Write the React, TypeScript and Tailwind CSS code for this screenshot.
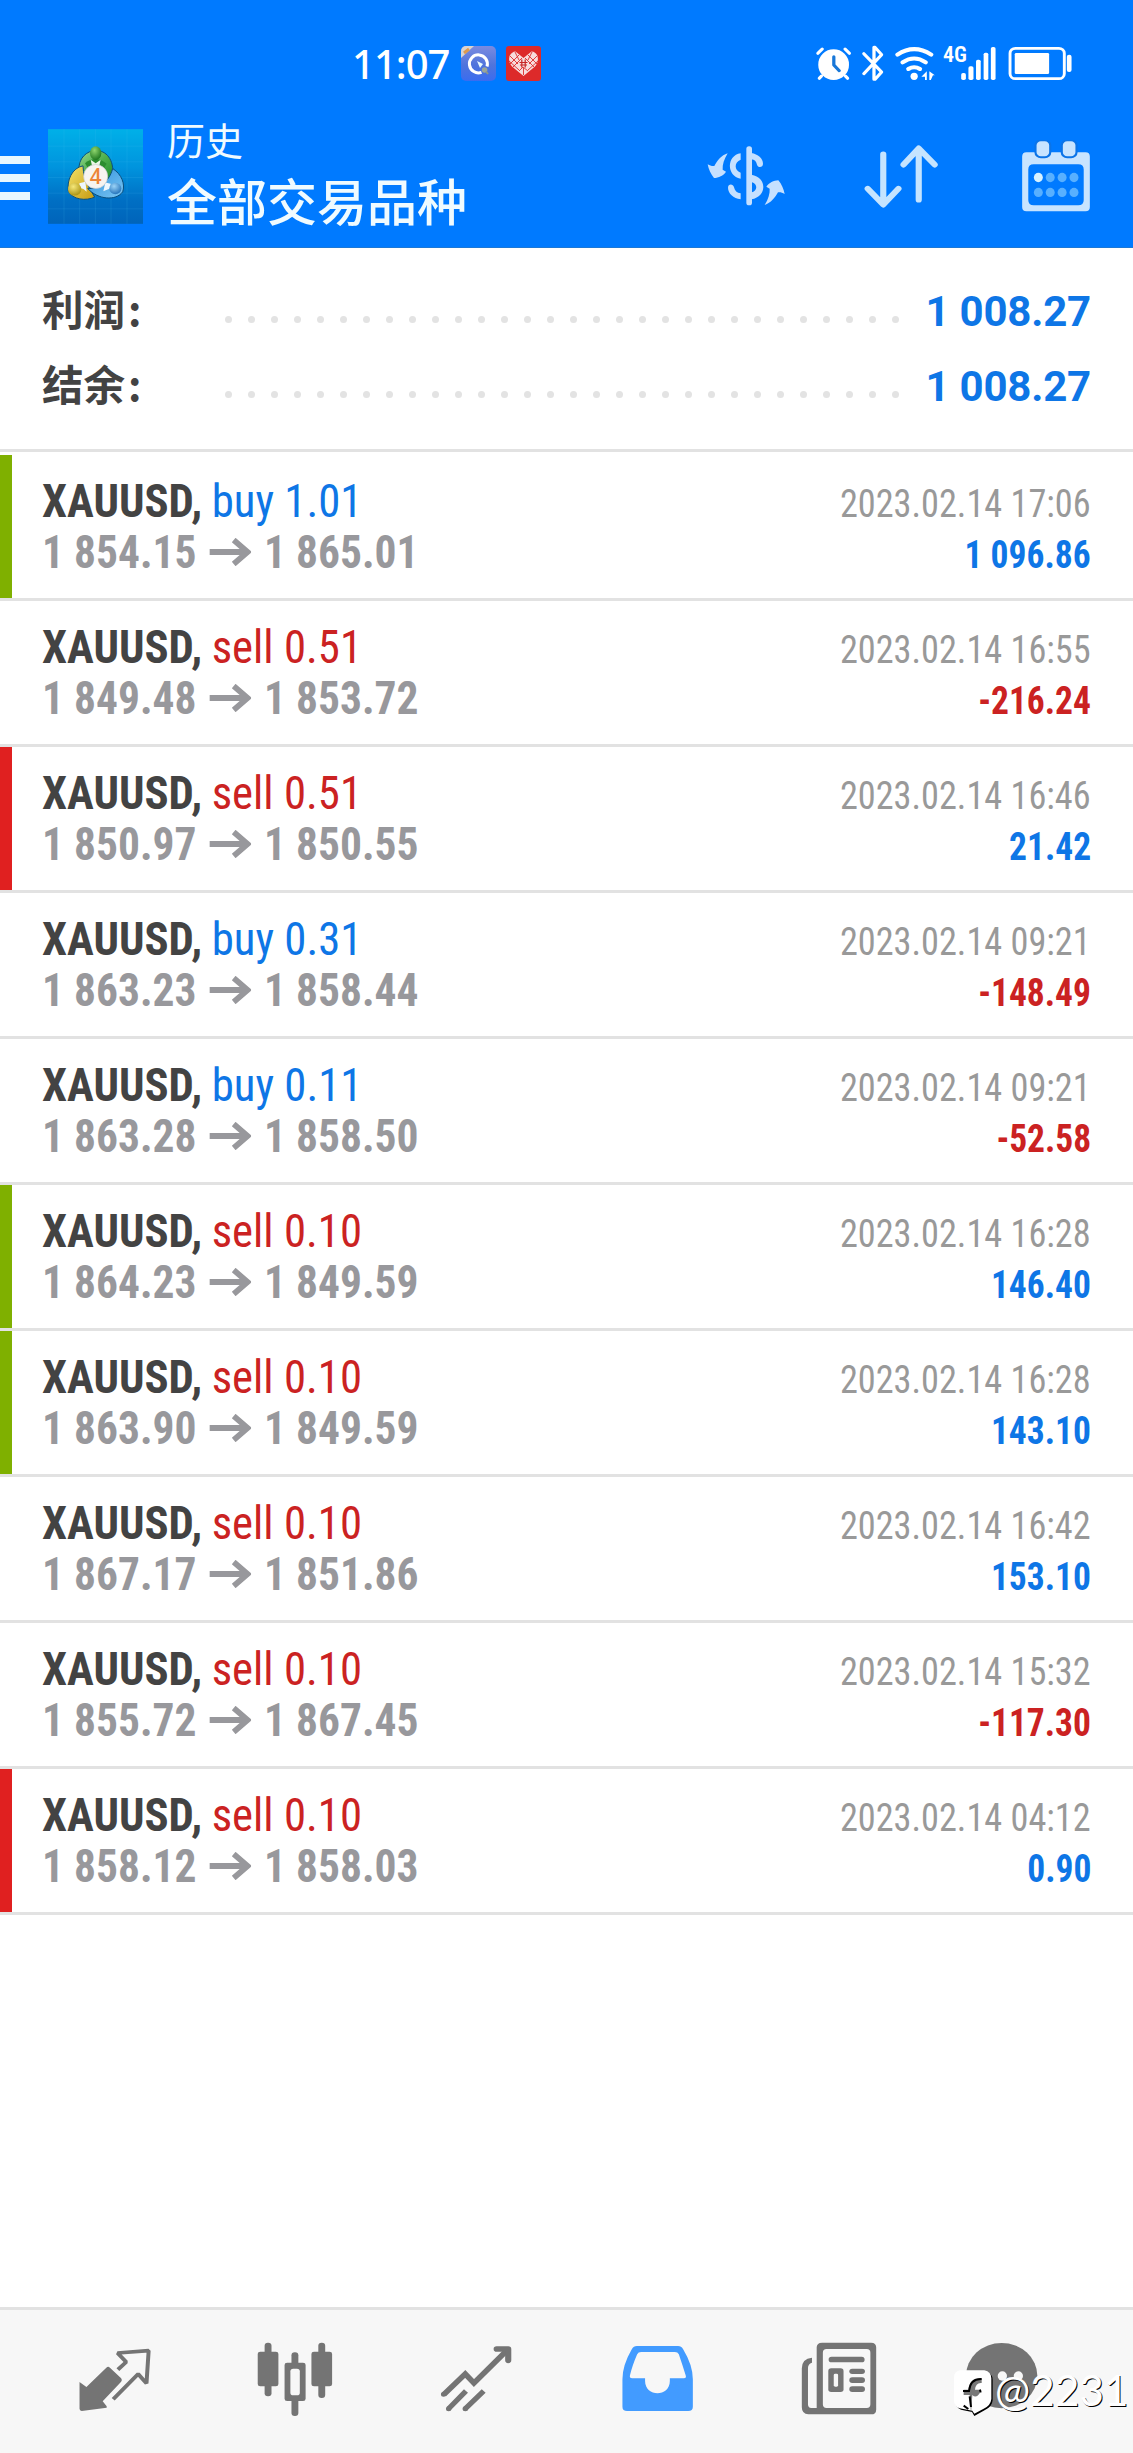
import React from "react";

type Deal = {
  side: "buy" | "sell";
  volume: string;
  open: string;
  close: string;
  time: string;
  profit: string;
  mark?: "tp" | "sl";
};

const deals: Deal[] = [
  { side: "buy", volume: "1.01", open: "1 854.15", close: "1 865.01", time: "2023.02.14 17:06", profit: "1 096.86", mark: "tp" },
  { side: "sell", volume: "0.51", open: "1 849.48", close: "1 853.72", time: "2023.02.14 16:55", profit: "-216.24" },
  { side: "sell", volume: "0.51", open: "1 850.97", close: "1 850.55", time: "2023.02.14 16:46", profit: "21.42", mark: "sl" },
  { side: "buy", volume: "0.31", open: "1 863.23", close: "1 858.44", time: "2023.02.14 09:21", profit: "-148.49" },
  { side: "buy", volume: "0.11", open: "1 863.28", close: "1 858.50", time: "2023.02.14 09:21", profit: "-52.58" },
  { side: "sell", volume: "0.10", open: "1 864.23", close: "1 849.59", time: "2023.02.14 16:28", profit: "146.40", mark: "tp" },
  { side: "sell", volume: "0.10", open: "1 863.90", close: "1 849.59", time: "2023.02.14 16:28", profit: "143.10", mark: "tp" },
  { side: "sell", volume: "0.10", open: "1 867.17", close: "1 851.86", time: "2023.02.14 16:42", profit: "153.10" },
  { side: "sell", volume: "0.10", open: "1 855.72", close: "1 867.45", time: "2023.02.14 15:32", profit: "-117.30" },
  { side: "sell", volume: "0.10", open: "1 858.12", close: "1 858.03", time: "2023.02.14 04:12", profit: "0.90", mark: "sl" },
];

function SearchAppIcon() {
  return (
    <svg className="h-[35px] w-[35px]" viewBox="0 0 35 35">
      <defs>
        <linearGradient id="qa" x1="0" y1="0" x2="0" y2="1">
          <stop offset="0" stopColor="#7b8be0" />
          <stop offset="0.55" stopColor="#4f74dc" />
          <stop offset="1" stopColor="#3a6cf0" />
        </linearGradient>
        <clipPath id="qc"><rect width="35" height="35" rx="5" /></clipPath>
      </defs>
      <g clipPath="url(#qc)">
        <rect width="35" height="35" fill="url(#qa)" />
        <path d="M0 0H13L0 12Z" fill="#d9d3cf" />
        <path d="M3 7l5-4" stroke="#dc9a4e" strokeWidth="3" />
      </g>
      <path d="M20.5 26.3A9 9 0 1 1 26 20.5" fill="none" stroke="#fff" strokeWidth="3" />
      <path d="M16 15l6 3-3 4Z" fill="#e8fbff" />
      <circle cx="23.6" cy="24" r="2.8" fill="#9aa69a" />
      <path d="M25 25.500l2 2.500" stroke="#8b968f" strokeWidth="2" />
    </svg>
  );
}

function HeartAppIcon() {
  return (
    <svg className="h-[35px] w-[35px]" viewBox="0 0 35 35">
      <rect width="35" height="35" rx="3" fill="#dd2a2a" />
      <path d="M17.500 30L6 20.500Q2 16 3.500 10Q6 5.500 9.500 5.500L17.500 12L25.500 5.500Q29.500 5.500 31.500 10Q33 16 29 20.500Z" fill="#f7dcdc" />
      <g stroke="#dd2a2a" strokeWidth="0.900" fill="none">
        <path d="M4 10l8 8M3 15l10 9M9 6l4 8M13 9l-9 9M16 12l-9 9M31 10l-8 8M32 15l-10 9M26 6l-4 8M22 9l9 9M19 12l9 9M13 25l4-4 5 4M17.500 22v7" />
      </g>
      <path d="M13.500 16.500h8M14 19h7M15.800 13.500v8M19.200 13.500v8" stroke="#c62525" strokeWidth="1.200" />
    </svg>
  );
}

function StatusIcons() {
  return (
    <svg className="h-[40px] w-[258px]" viewBox="690 132 713 120" preserveAspectRatio="none">
      <g fill="#fff">
        <ellipse cx="741.500" cy="194" rx="42.500" ry="46" />
        <path d="M708 228l-6 7M774 228l6 7" stroke="#fff" strokeWidth="9" strokeLinecap="round" />
        <path d="M698 160l12-13M785 160l-12-13" stroke="#fff" strokeWidth="9" strokeLinecap="round" />
        <path d="M742 170v25l15 17" fill="none" stroke="#1877d8" strokeWidth="9" strokeLinecap="round" strokeLinejoin="round" />
      </g>
      <path d="M825 161L874 216L856 238H853V142H856L874 164L825 221" fill="none" stroke="#fff" strokeWidth="9" strokeLinecap="round" strokeLinejoin="round" />
      <g fill="none" stroke="#fff" strokeWidth="12" strokeLinecap="round">
        <path d="M918 164Q964 131 1011 164" />
        <path d="M932 187Q964 164 996 187" />
        <path d="M948 207Q964 196 980 207" />
      </g>
      <ellipse cx="964" cy="229" rx="10" ry="11" fill="#fff" />
      <path d="M999 214v26h-5v-10h-10zM1006 214l15 12h-5l-6 14h-4z" fill="#fff" />
      <g fill="#fff">
        <rect x="1094" y="219" width="13" height="21" rx="5" />
        <rect x="1114" y="199" width="14" height="41" rx="5" />
        <rect x="1135" y="179" width="13" height="61" rx="5" />
        <rect x="1156" y="158" width="13" height="82" rx="5" />
        <rect x="1176" y="141" width="13" height="99" rx="5" />
        <rect x="1242" y="159" width="95" height="63" rx="4" />
        <rect x="1386" y="164" width="13" height="52" rx="6" />
      </g>
      <rect x="1229" y="145" width="150" height="91" rx="15" fill="none" stroke="#fff" strokeWidth="8" />
    </svg>
  );
}

function AppLogo() {
  return (
    <svg className="ml-[18px] h-[95px] w-[95px]" viewBox="144 58 285 284">
      <defs>
        <linearGradient id="bg" x1="0" y1="0" x2="0" y2="1">
          <stop offset="0" stopColor="#00b0e8" />
          <stop offset="0.4" stopColor="#0094de" />
          <stop offset="0.75" stopColor="#006fc4" />
          <stop offset="1" stopColor="#0064ba" />
        </linearGradient>
        <linearGradient id="gr" x1="0" y1="0" x2="1" y2="1">
          <stop offset="0" stopColor="#9ad894" />
          <stop offset="0.5" stopColor="#4fb04c" />
          <stop offset="1" stopColor="#1f8c2a" />
        </linearGradient>
        <linearGradient id="ye" x1="0" y1="0" x2="1" y2="1">
          <stop offset="0" stopColor="#f3e36a" />
          <stop offset="1" stopColor="#c79a10" />
        </linearGradient>
        <linearGradient id="bl" x1="0" y1="0" x2="1" y2="1">
          <stop offset="0" stopColor="#2c8fdc" />
          <stop offset="1" stopColor="#7cc6f2" />
        </linearGradient>
        <radialGradient id="gb" cx="0.4" cy="0.3" r="0.8">
          <stop offset="0" stopColor="#8fd66e" />
          <stop offset="1" stopColor="#0f6a14" />
        </radialGradient>
        <radialGradient id="yb" cx="0.4" cy="0.3" r="0.8">
          <stop offset="0" stopColor="#f6e87a" />
          <stop offset="1" stopColor="#a38a08" />
        </radialGradient>
        <radialGradient id="bb" cx="0.4" cy="0.3" r="0.8">
          <stop offset="0" stopColor="#9bd3f7" />
          <stop offset="1" stopColor="#1668b4" />
        </radialGradient>
      </defs>
      <rect x="144" y="58" width="285" height="284" fill="url(#bg)" />
      <path d="M192 58v284M239 58v284M286 58v284M333 58v284M381 58v284M144 109h285M144 156h285M144 203h285M144 250h285M144 297h285" stroke="#4cc0f0" strokeOpacity="0.22" strokeWidth="2" />
      <g stroke="#0b4f7d" strokeWidth="3" strokeLinejoin="round">
        <path d="M237 182C234 146 260 122 288 122C318 122 343 148 338 198C330 216 300 210 288 196C270 190 244 190 237 182Z" fill="url(#gr)" />
        <path d="M249 168C216 174 200 212 205 244C218 270 258 274 284 262C276 246 250 216 249 168Z" fill="url(#ye)" />
        <path d="M338 176C366 194 376 224 368 246C348 274 294 270 263 236C290 238 326 222 338 176Z" fill="url(#bl)" />
      </g>
      <path d="M255 160Q288 134 320 162L310 178H266Z" fill="#2c8d2f" />
      <path d="M272 150l15 10 15-10-4 18h-22z" fill="#e9f7e6" />
      <path d="M238 220l18-4 4 30q-8-10-22-12zM316 218l16 4-2 14-20 8z" fill="#eef8ff" />
      <ellipse cx="287" cy="130" rx="17" ry="21" fill="url(#gb)" />
      <ellipse cx="224" cy="238" rx="20" ry="19" fill="url(#yb)" />
      <ellipse cx="346" cy="236" rx="18" ry="17" fill="url(#bb)" />
      <circle cx="287" cy="200" r="36" fill="#f7f4f0" stroke="#c8ccd0" strokeWidth="2" />
      <text x="287" y="222" textAnchor="middle" fontFamily="Open Sans" fontSize="62" fontWeight="600" fill="#ec8436">4</text>
    </svg>
  );
}

function CashFlowIcon() {
  return (
    <svg className="h-[62px] w-[80px]" viewBox="76 71 240 186" fill="#c5e0ff">
      <rect x="197" y="75" width="17" height="177" rx="8" />
      <path d="M180 96C137 102 137 165 180 172V154C160 147 160 122 180 115Z" />
      <path d="M212 95C232 98 247 112 247 127C247 139 232 140 229 130C227 120 222 115 212 114Z" />
      <path d="M142 199C142 187 157 186 160 198C162 208 169 215 180 216V234C158 231 142 216 142 199Z" />
      <path fillRule="evenodd" d="M212 160C260 168 260 226 212 234ZM214 183C231 188 231 208 214 213Z" />
      <path d="M141 96C130 114 125 130 126 145L136 151C128 163 114 169 100 170C90 158 84 144 81 129C88 133 94 135 101 134C110 118 122 102 141 96Z" />
      <path transform="rotate(180 196.500 173.500)" d="M141 96C130 114 125 130 126 145L136 151C128 163 114 169 100 170C90 158 84 144 81 129C88 133 94 135 101 134C110 118 122 102 141 96Z" />
    </svg>
  );
}

function SortIcon() {
  return (
    <svg className="h-[65px] w-[76px]" viewBox="820 430 210 195" preserveAspectRatio="none" fill="none" stroke="#c5e4ff" strokeWidth="17" strokeLinecap="round" strokeLinejoin="round">
      <path d="M876 461V611M833 564L876 612L918 564" />
      <path d="M974 597V445M932 492L974 443L1018 492" />
    </svg>
  );
}

function CalendarIcon() {
  return (
    <svg className="h-[73px] w-[72px]" viewBox="1255 415 200 220" preserveAspectRatio="none">
      <path fillRule="evenodd" fill="#c8e4ff" d="M1273 452H1437Q1449 452 1449 465V617Q1449 630 1437 630H1273Q1261 630 1261 617V465Q1261 452 1273 452ZM1293 488Q1278 488 1278 504V596Q1278 612 1293 612H1417Q1432 612 1432 596V504Q1432 488 1417 488Z" />
      <rect x="1298" y="416" width="41" height="51" rx="15" fill="#c8e4ff" stroke="#0b74e8" strokeWidth="6" />
      <rect x="1371" y="416" width="41" height="51" rx="15" fill="#c8e4ff" stroke="#0b74e8" strokeWidth="6" />
      <g fill="#58b0ff">
        <ellipse cx="1306" cy="528" rx="12.500" ry="14" fill="#d8f2ff" />
        <ellipse cx="1339" cy="528" rx="12.500" ry="14" />
        <ellipse cx="1372" cy="528" rx="12.500" ry="14" />
        <ellipse cx="1405" cy="528" rx="12.500" ry="14" />
        <ellipse cx="1306" cy="573" rx="12.500" ry="14" />
        <ellipse cx="1339" cy="573" rx="12.500" ry="14" />
        <ellipse cx="1372" cy="573" rx="12.500" ry="14" />
        <ellipse cx="1405" cy="573" rx="12.500" ry="14" />
      </g>
    </svg>
  );
}

function Header() {
  return (
    <header className="flex h-[248px] shrink-0 flex-col border-b border-[#1c78d6] bg-[#007aff]">
      <div className="flex h-[105px] items-start pt-[44px] pr-[60px] pl-[352px]">
        <span className="-mt-px w-[108px] font-['Noto_Sans'] text-[40px] leading-[41px] font-medium tracking-[-1px] text-white">11:07</span>
        <div className="mt-[2px] ml-px flex gap-[10px]">
          <SearchAppIcon />
          <HeartAppIcon />
        </div>
        <div className="relative ml-auto">
          <StatusIcons />
          <span className="absolute top-0 left-[128px] font-['Roboto_Condensed'] text-[22px] leading-[22px] font-semibold text-white">4G</span>
        </div>
      </div>
      <div className="flex h-[142px] items-center">
        <div className="mt-[4px] flex w-[30px] flex-col gap-[10px]">
          <div className="h-[8px] bg-[#e8f7ff]" />
          <div className="h-[8px] bg-[#e8f7ff]" />
          <div className="h-[8px] bg-[#e8f7ff]" />
        </div>
        <AppLogo />
        <div className="mb-[14px] ml-[24px] font-medium text-[#f0fbff]">
          <div className="text-[38px] leading-[60px] font-normal">历史</div>
          <div className="text-[50px] leading-[61px]">全部交易品种</div>
        </div>
        <div className="ml-auto flex items-center pr-[41px]">
          <CashFlowIcon />
          <div className="ml-[77px]"><SortIcon /></div>
          <div className="ml-[81px]"><CalendarIcon /></div>
        </div>
      </div>
    </header>
  );
}

function SummaryRow({ label, value }: { label: string; value: string }) {
  return (
    <div className="flex h-[75px] items-center justify-between pr-[42px] pl-[42px]">
      <span className="mb-[6px] w-[183px] text-[41.500px] leading-[69px] font-bold text-[#434343]">
        {label}
        <span className="ml-[3px]">:</span>
      </span>
      <div className="mt-[15px] flex w-[674px] justify-between">
        {Array.from({ length: 30 }, (_, i) => (
          <span key={i} className="size-[7px] rounded-full bg-[#e3e3e3]" />
        ))}
      </div>
      <span className="w-[192px] text-right font-[Roboto] text-[42px] leading-[75px] font-bold tracking-[-0.200px] text-[#0e76e6]">{value}</span>
    </div>
  );
}

function PriceArrow() {
  return (
    <svg className="mr-[14px] ml-[14px] h-[28px] w-[45px]" viewBox="0 0 42 28" preserveAspectRatio="none" fill="none" stroke="#98989c" strokeWidth="5.800">
      <path d="M0 14H38M24.500 2L38.500 14L24.500 26" />
    </svg>
  );
}

function DealRow({ deal }: { deal: Deal }) {
  const bar = deal.mark === "tp" ? "bg-[#7fb000]" : deal.mark === "sl" ? "bg-[#e02020]" : "bg-transparent";
  const sideColor = deal.side === "buy" ? "text-[#0e76e6]" : "text-[#cb2222]";
  const profitColor = deal.profit.startsWith("-") ? "text-[#cb2222]" : "text-[#0e76e6]";
  return (
    <div className="flex h-[146px] border-b-[3px] border-[#e2e2e2] font-['Roboto_Condensed']">
      <div className={`w-[12px] shrink-0 ${bar}`} />
      <div className="flex-1 pt-[20px] pr-[42px] pl-[30px]">
        <div className="flex h-[51px] items-baseline justify-between leading-[51px]">
          <div className="origin-left scale-x-[0.952] text-[47px]">
            <span className="font-bold text-[#434343]">XAUUSD,</span>
            <span className={`ml-[10px] ${sideColor}`}>{deal.side} {deal.volume}</span>
          </div>
          <span className="origin-right scale-x-[0.930] text-[39px] text-[#999999]">{deal.time}</span>
        </div>
        <div className="flex h-[51px] items-baseline justify-between leading-[51px]">
          <div className="flex origin-left scale-x-[0.925] items-center text-[47px] font-bold text-[#98989c]">
            <span>{deal.open}</span>
            <PriceArrow />
            <span>{deal.close}</span>
          </div>
          <span className={`origin-right scale-x-[0.910] text-[39px] font-bold ${profitColor}`}>{deal.profit}</span>
        </div>
      </div>
    </div>
  );
}

function NavBar() {
  return (
    <nav className="flex h-[146px] shrink-0 items-start border-t-[3px] border-[#e2e2e2] bg-[#f7f7f7] pt-[25px] pl-[24px]">
      <div className="flex w-[181px] justify-center">
        <svg className="h-[88px] w-[76px]" viewBox="212 135 210 264" preserveAspectRatio="none">
          <path d="M219 276L238 291L293 233Q298 228 303 233L334 265Q338 270 334 275L283 334L294 349L294 353L225 363Q219 362 219 356Z" fill="#747474" />
          <path d="M325 239L348 216L324 189L410 182L404 280L381 252L312 328" fill="none" stroke="#747474" strokeWidth="11" strokeLinejoin="bevel" />
        </svg>
      </div>
      <div className="flex w-[181px] justify-center">
        <svg className="h-[88px] w-[78px]" viewBox="713 135 215 264" preserveAspectRatio="none" fill="#747474">
          <rect x="734" y="158" width="19" height="161" rx="9" />
          <rect x="715" y="185" width="57" height="104" rx="7" />
          <rect x="882" y="158" width="19" height="166" rx="9" />
          <rect x="863" y="185" width="57" height="104" rx="7" />
          <rect x="808" y="187" width="19" height="191" rx="9" />
          <rect x="789" y="218" width="58" height="115" rx="7" />
          <rect x="805" y="236" width="26" height="80" rx="8" fill="#f7f7f7" />
        </svg>
      </div>
      <div className="flex w-[181px] justify-center">
        <svg className="h-[88px] w-[74px]" viewBox="1219 135 205 264" preserveAspectRatio="none" fill="none" stroke="#747474" strokeWidth="15">
          <path d="M1230 313L1289 252L1313 279L1408 177" strokeWidth="16" />
          <path d="M1376 177H1408V211" strokeWidth="17" strokeLinecap="round" strokeLinejoin="round" />
          <path d="M1243 356L1291 303M1289 356L1340 303" />
          <path d="M1229 313h.1M1243 356h.1M1289 356h.1" strokeLinecap="round" />
        </svg>
      </div>
      <div className="flex w-[181px] justify-center">
        <svg className="h-[88px] w-[74px]" viewBox="151 135 206 264" preserveAspectRatio="none">
          <path fillRule="evenodd" fill="#429bff" d="M195 168H310Q319 168 324 178Q351 226 351 268V350Q351 363 338 363H168Q155 363 155 350V268Q155 226 181 178Q186 168 195 168ZM207 186Q199 186 196 193Q182 228 176 256Q174 265 182 265H218V273C218 322 287 322 287 273V265H326Q334 265 331 256Q323 228 312 193Q309 186 301 186Z" />
        </svg>
      </div>
      <div className="flex w-[181px] justify-center">
        <svg className="h-[88px] w-[78px]" viewBox="649 135 215 264" preserveAspectRatio="none">
          <path fillRule="evenodd" fill="#747474" d="M710 158H845Q859 158 859 172V359Q859 373 845 373H672Q654 372 654 352V235Q654 206 682 203V218Q671 221 671 235V343Q671 354 680 354H695V172Q695 158 710 158ZM722 177Q712 177 712 188V343Q712 354 722 354H833Q843 354 843 343V188Q843 177 833 177Z" />
          <g fill="#747474">
            <rect x="728" y="200" width="99" height="17" rx="8" />
            <rect x="727" y="235" width="42" height="71" rx="8" />
            <rect x="785" y="236" width="43" height="16" rx="8" />
            <rect x="785" y="262" width="43" height="17" rx="8" />
            <rect x="785" y="289" width="43" height="17" rx="8" />
          </g>
          <rect x="742" y="251" width="12" height="39" rx="4" fill="#f7f7f7" />
        </svg>
      </div>
      <div className="relative flex w-[181px] justify-start pl-[36px]">
        <svg className="h-[88px] w-[74px]" viewBox="66 15 222 264">
          <ellipse cx="176" cy="137" rx="107" ry="98" fill="#747474" />
          <circle cx="178" cy="138" r="14" fill="#f7f7f7" />
          <circle cx="226" cy="138" r="14" fill="#f7f7f7" />
        </svg>
        <div className="absolute top-[34px] left-[24px] flex">
          <svg className="h-[50px] w-[42px] shrink-0" viewBox="30 118 126 150">
            <path d="M54 126H128Q149 130 149 150V212Q147 232 126 241L94 259L87 247L54 240Q37 234 37 214V146Q38 130 54 126Z" fill="#000" />
            <path d="M50 122H124Q145 126 145 146V208Q143 228 122 237L94 252L88 243L50 236Q33 230 33 210V142Q34 126 50 122Z" fill="#fff" />
            <path d="M84 252L80 196H62V180H78Q78 144 116 148V160Q98 158 96 180H110Q114 180 112 188Q100 208 88 196Z" fill="#777" />
            <path d="M60 184H78Q82 146 116 148M110 180Q114 184 112 188M80 200L84 232M62 228L76 238" stroke="#000" strokeWidth="6" fill="none" />
          </svg>
          <span className="mt-[-5px] font-[Lato] text-[42px] leading-[52px] font-normal tracking-[0.200px] whitespace-nowrap text-white [text-shadow:1px_1px_0_#000]">@2231</span>
        </div>
      </div>
    </nav>
  );
}

export default function App() {
  return (
    <div className="flex h-[2453px] w-[1133px] flex-col overflow-hidden bg-white font-['Noto_Sans_CJK_SC',sans-serif]">
      <Header />
      <section className="h-[204px] shrink-0 border-b-[3px] border-[#e2e2e2] pt-[26px]">
        <SummaryRow label="利润" value="1 008.27" />
        <SummaryRow label="结余" value="1 008.27" />
      </section>
      <main className="mt-[3px] flex-1">
        {deals.map((deal, i) => (
          <DealRow key={i} deal={deal} />
        ))}
      </main>
      <NavBar />
    </div>
  );
}
